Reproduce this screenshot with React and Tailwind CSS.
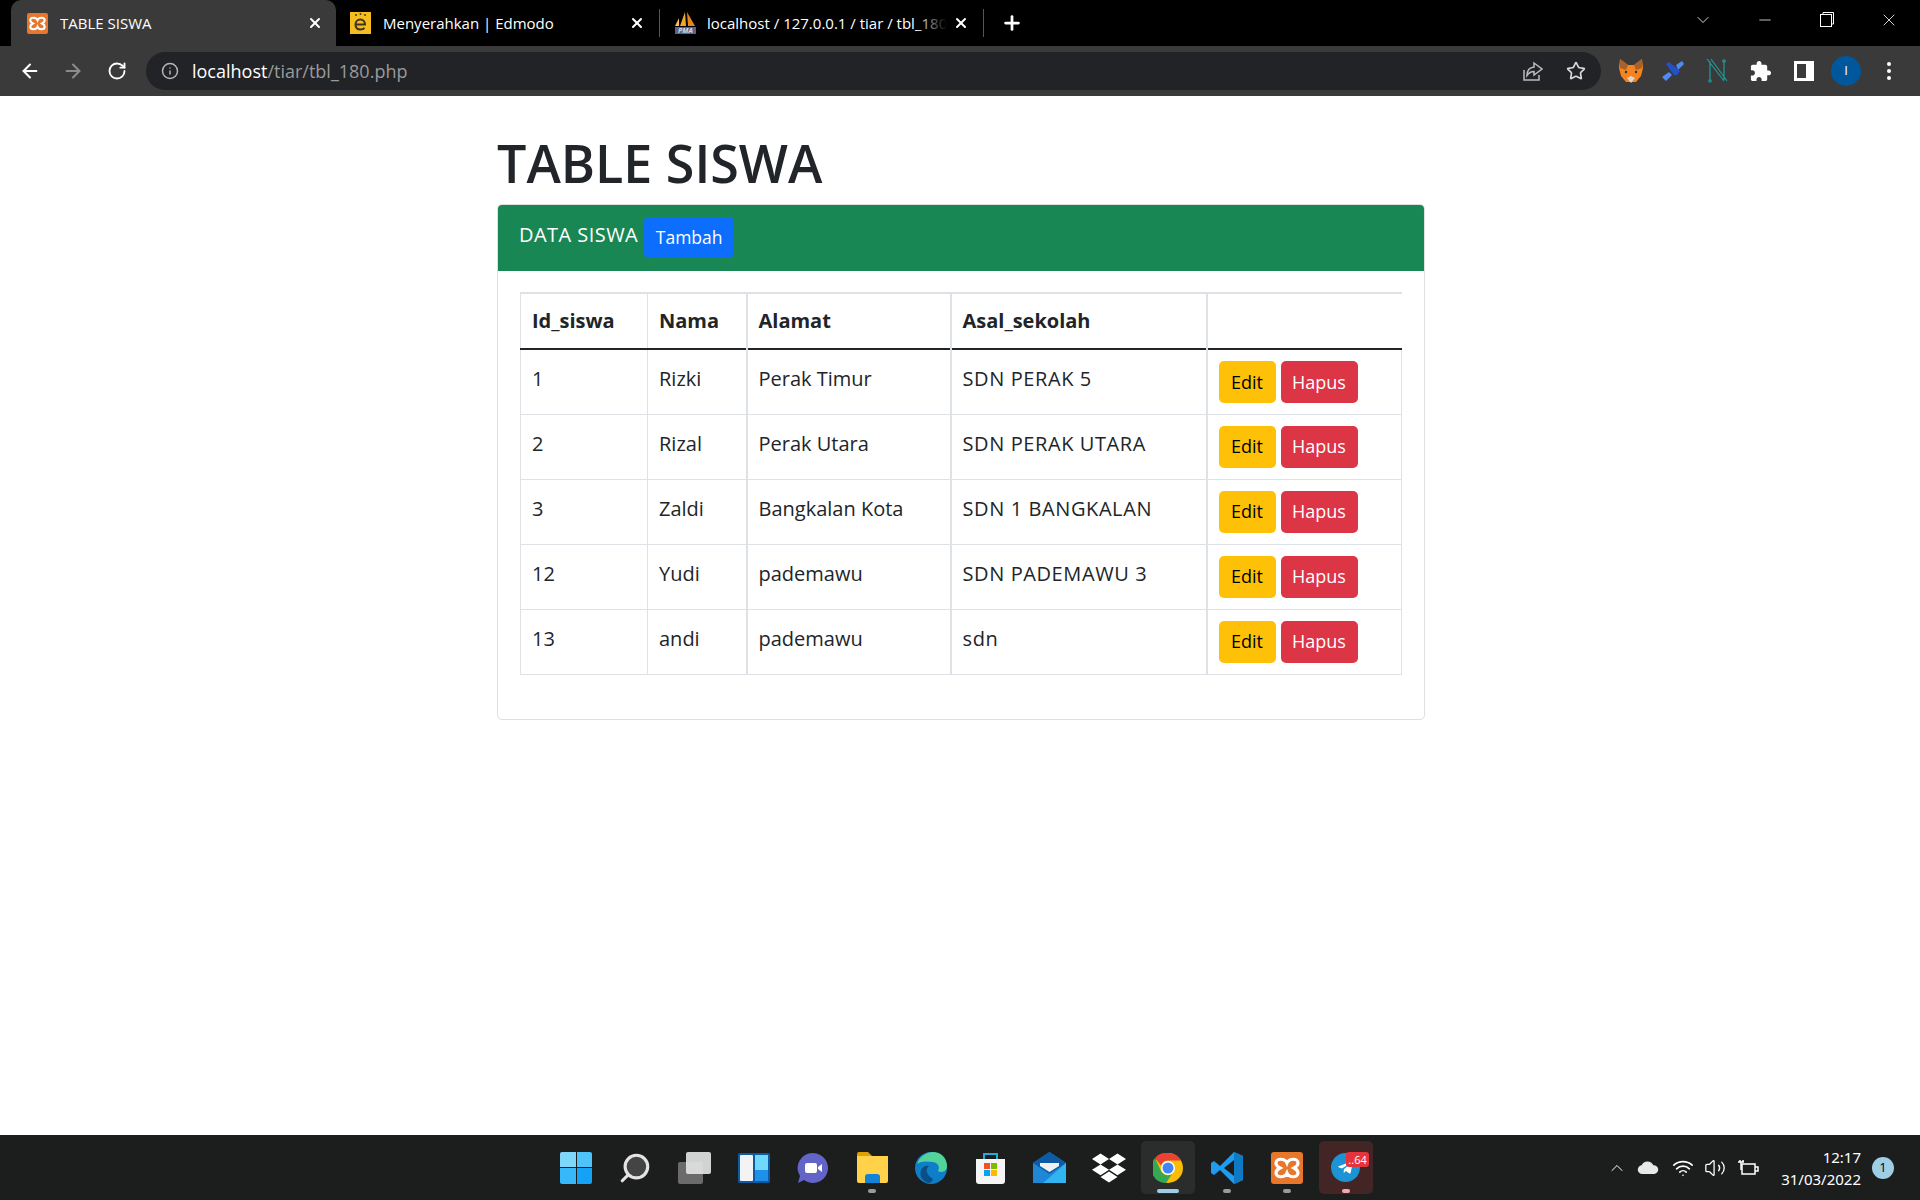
import {
  ArrowLeft,
  ArrowRight,
  RotateCw,
  Info,
  Star,
  X,
  Plus,
  Minus,
  ChevronDown,
  ChevronUp,
  Volume2,
  Wifi,
  Search,
} from "lucide-react";
import { FaDropbox, FaTelegramPlane } from "react-icons/fa";

const siswa = [
  { id: 1, nama: "Rizki", alamat: "Perak Timur", sekolah: "SDN PERAK 5" },
  { id: 2, nama: "Rizal", alamat: "Perak Utara", sekolah: "SDN PERAK UTARA" },
  { id: 3, nama: "Zaldi", alamat: "Bangkalan Kota", sekolah: "SDN 1 BANGKALAN" },
  { id: 12, nama: "Yudi", alamat: "pademawu", sekolah: "SDN PADEMAWU 3" },
  { id: 13, nama: "andi", alamat: "pademawu", sekolah: "sdn" },
];

function Xampp({ size = 20 }) {
  return (
    <svg width={size} height={size} viewBox="0 0 32 32">
      <rect width="32" height="32" rx="3" fill="#e8762b" />
      <path
        d="M16 11C14 6 5 6 5 11c0 2 2 4 4 5-2 1-4 3-4 5 0 5 9 5 11 0 2 5 11 5 11 0 0-2-2-4-4-5 2-1 4-3 4-5 0-5-9-5-11 0z"
        fill="none"
        stroke="#fff"
        strokeWidth="3.2"
      />
    </svg>
  );
}

function Tab({ icon, title, width, active, fade }) {
  return (
    <div
      className={`flex h-[46px] shrink-0 items-center ${width} ${
        active ? "rounded-t-[10px] bg-[#3a3a3a] pl-[16px] pr-[13px]" : "pl-[14px] pr-[14px]"
      }`}
    >
      <div className="flex w-[33px] shrink-0 items-center">{icon}</div>
      <div className="relative min-w-0 flex-1 overflow-hidden whitespace-nowrap text-[15px] text-white">
        {title}
        {fade && (
          <span className="absolute inset-y-0 right-0 w-[32px] bg-gradient-to-r from-transparent to-black" />
        )}
      </div>
      <X size={16} strokeWidth={3} className="ml-[6px] shrink-0 text-white" />
    </div>
  );
}

function TaskIcon({ children, active, dot }) {
  return (
    <div
      className={`relative flex h-[53px] w-[54px] items-center justify-center rounded-[5px] ${
        active === "chrome" ? "bg-[#2b2d2d]" : active === "tg" ? "bg-[#432526]" : ""
      }`}
    >
      {children}
      {dot && <span className={`absolute bottom-[1px] h-[4px] rounded-full ${dot}`} />}
    </div>
  );
}

export default function App() {
  return (
    <div className="flex h-[1200px] flex-col overflow-hidden bg-white font-['Open_Sans','Noto_Sans',sans-serif]">
      {/* Tab strip */}
      <div className="flex h-[46px] shrink-0 items-center bg-black pl-[11px]">
        <Tab active width="w-[325px]" title="TABLE SISWA" icon={<Xampp size={21} />} />
        <Tab
          width="w-[323px]"
          title="Menyerahkan | Edmodo"
          icon={
            <svg width="21" height="22" viewBox="0 0 21 22">
              <rect width="21" height="22" fill="#f6bd1f" />
              <circle cx="6" cy="3" r="1" fill="#4a3b10" />
              <circle cx="10.5" cy="2" r="1" fill="#4a3b10" />
              <circle cx="15" cy="3" r="1" fill="#4a3b10" />
              <path
                d="M5.500 12.500h9.500c0-3-2-5-4.700-5S5.500 9.500 5.500 12.500c0 3 2 5 5 5 1.500 0 3-.5 4-1.500"
                fill="none"
                stroke="#3d3520"
                strokeWidth="2"
              />
            </svg>
          }
        />
        <div className="h-[28px] w-px bg-[#555]" />
        <Tab
          fade
          width="w-[323px]"
          title="localhost / 127.0.0.1 / tiar / tbl_180"
          icon={
            <svg width="23" height="24" viewBox="0 0 23 24">
              <path d="M11 1 6 15h6z" fill="#f5a623" />
              <path d="M13 1l8 14h-7z" fill="#e8871a" />
              <path d="M5 7 1 15h4z" fill="#f8c063" />
              <rect x="1" y="16" width="21" height="7" fill="#5b6483" />
              <text x="11.500" y="22" fontSize="7" fontWeight="700" fontStyle="italic" textAnchor="middle" fill="#d5d8e6">
                PMA
              </text>
            </svg>
          }
        />
        <div className="h-[28px] w-px bg-[#555]" />
        <Plus size={22} strokeWidth={3} className="ml-[17px] text-white" />
        <div className="ml-auto flex items-center pb-[7px] text-white">
          <div className="flex w-[62px] justify-center">
            <ChevronDown size={20} strokeWidth={1} />
          </div>
          <div className="flex w-[62px] justify-center">
            <Minus size={18} strokeWidth={1} />
          </div>
          <div className="flex w-[62px] justify-center">
            <svg width="14" height="15" viewBox="0 0 14 15" fill="none" stroke="#fff">
              <rect x="0.5" y="2.5" width="11" height="12" />
              <path d="M3 2.500V.5h10.500v11.500h-2" />
            </svg>
          </div>
          <div className="flex w-[62px] justify-center">
            <X size={20} strokeWidth={1} />
          </div>
        </div>
      </div>

      {/* Toolbar */}
      <div className="flex h-[50px] shrink-0 items-center bg-[#3a3a3a] pl-[19px]">
        <ArrowLeft size={22} strokeWidth={2.2} className="text-white" />
        <ArrowRight size={22} strokeWidth={2.2} className="ml-[21px] text-[#8c8c8c]" />
        <RotateCw size={20} strokeWidth={2.2} className="ml-[23px] text-white" />
        <div className="ml-[19px] flex h-[38px] w-[1455px] items-center rounded-full bg-[#222327] px-[15px]">
          <Info size={18} className="text-[#b5b5b5]" />
          <span className="ml-[13px] text-[18px] leading-[24px] text-white">localhost</span>
          <span className="text-[18px] leading-[24px] text-[#9a9a9a]">/tiar/tbl_180.php</span>
          <svg className="ml-auto" width="20" height="20" viewBox="0 0 20 20" fill="none" stroke="#bcbcbc" strokeWidth="1.5">
            <path d="M1 9v10h15v-5" />
            <path d="M11 2l8 6-8 6v-3.500c-3 0-5 1-7 4 0-5 3-8 7-8.500z" />
          </svg>
          <Star size={20} strokeWidth={2} className="ml-[23px] text-[#d8d8d8]" />
        </div>
        <div className="ml-[17px] flex items-center">
          <svg width="26" height="26" viewBox="0 0 26 26">
            <path d="M2 1l8 6h6l8-6 1 9-2 8-5 6h-10l-5-6-2-8z" fill="#f5841f" />
            <path d="M2 1l8 6-2 5-6-2zM24 1l-8 6 2 5 6-2z" fill="#a8612a" />
            <path d="M9 20l4 5 4-5-4-2z" fill="#e6d5c6" />
            <circle cx="8" cy="14" r="1.2" fill="#233447" />
            <circle cx="18" cy="14" r="1.2" fill="#233447" />
          </svg>
          <svg className="ml-[17px]" width="24" height="24" viewBox="0 0 24 24">
            <path d="M1 18l7-5 3 3-6 6z" fill="#4e8af0" />
            <path d="M15 6l6-4 2 3-6 6z" fill="#4e8af0" />
            <path d="M5 5l3-2 11 9-3 4-3 0z" fill="#2450c8" />
          </svg>
          <svg className="ml-[20px]" width="24" height="26" viewBox="0 0 24 26" fill="none" stroke="#1e9a9a" strokeWidth="1.2">
            <path d="M5 3v19M19 3v19M2 1l17 22M6 1l16 22" />
            <circle cx="5" cy="23" r="1.200" />
            <circle cx="19" cy="3" r="1.200" />
          </svg>
          <svg className="ml-[20px]" width="23" height="23" viewBox="0 0 24 24" fill="#fff">
            <path d="M20.500 11H19V7c0-1.100-.9-2-2-2h-4V3.500C13 2.120 11.880 1 10.500 1S8 2.120 8 3.500V5H4c-1.100 0-1.990.9-1.990 2v3.800H3.500c1.490 0 2.700 1.210 2.700 2.700s-1.210 2.700-2.700 2.700H2V20c0 1.100.9 2 2 2h3.800v-1.500c0-1.490 1.210-2.700 2.700-2.700 1.490 0 2.700 1.210 2.700 2.700V22H17c1.100 0 2-.9 2-2v-4h1.500c1.380 0 2.500-1.120 2.500-2.500S21.880 11 20.500 11z" />
          </svg>
          <div className="ml-[22px] flex h-[20px] w-[20px] justify-end border-[3px] border-white">
            <div className="w-[5px] bg-white" />
          </div>
          <div className="ml-[17px] flex h-[30px] w-[30px] items-center justify-center rounded-full bg-[#01579b] text-[13px] text-white">
            I
          </div>
          <div className="ml-[26px] flex flex-col gap-[3px]">
            <span className="h-[4px] w-[4px] rounded-full bg-white" />
            <span className="h-[4px] w-[4px] rounded-full bg-white" />
            <span className="h-[4px] w-[4px] rounded-full bg-white" />
          </div>
        </div>
      </div>

      {/* Page */}
      <main className="min-h-0 flex-1 pl-[497px] text-[#212529]">
        <h1 className="mb-[11px] mt-[37px] text-[52px] font-semibold leading-[60px]">TABLE SISWA</h1>
        <div className="w-[928px] rounded-[5px] border border-[#dfdfdf] bg-white">
          <div className="flex h-[66px] items-start rounded-t-[4px] bg-[#198754] pl-[21px] pt-[12px] text-white">
            <span className="mt-[3px] text-[20px] leading-[30px] tracking-[0.45px]">DATA SISWA</span>
            <button className="ml-[6px] h-[41px] w-[90px] rounded-[5px] bg-[#0d6efd] text-[17.5px] text-white">
              Tambah
            </button>
          </div>
          <div className="pb-[44px] pl-[22px] pr-[21px] pt-[21px]">
            <table className="w-[881px] table-fixed border-collapse text-[20px]">
              <colgroup>
                <col className="w-[127px]" />
                <col className="w-[99px]" />
                <col className="w-[204px]" />
                <col className="w-[256px]" />
                <col className="w-[195px]" />
              </colgroup>
              <thead>
                <tr className="h-[56px] border-t-2 border-b-2 border-t-[#dee2e6] border-b-[#212529] font-bold">
                  <th className="border-x border-[#dee2e6] px-[11px] text-left">Id_siswa</th>
                  <th className="border-x border-[#dee2e6] px-[11px] text-left">Nama</th>
                  <th className="border-x-2 border-[#dee2e6] px-[11px] text-left">Alamat</th>
                  <th className="border-x-2 border-[#dee2e6] px-[11px] text-left">Asal_sekolah</th>
                  <th className="border-l border-[#dee2e6]" />
                </tr>
              </thead>
              <tbody>
                {siswa.map((s) => (
                  <tr key={s.id} className="h-[65px] border-b border-[#dee2e6] align-top">
                    <td className="border-x border-[#dee2e6] px-[11px] pt-[14px]">{s.id}</td>
                    <td className="border-x border-[#dee2e6] px-[11px] pt-[14px]">{s.nama}</td>
                    <td className="border-x-2 border-[#dee2e6] px-[11px] pt-[14px]">{s.alamat}</td>
                    <td className="border-x-2 border-[#dee2e6] px-[11px] pt-[14px] tracking-[0.6px]">{s.sekolah}</td>
                    <td className="border-x border-[#dee2e6] pl-[11px] pt-[11px]">
                      <div className="flex gap-[5px]">
                        <button className="h-[42px] w-[57px] rounded-[5px] bg-[#ffc107] text-[18px] text-black">
                          Edit
                        </button>
                        <button className="h-[42px] w-[77px] rounded-[5px] bg-[#dc3545] text-[18px] text-white">
                          Hapus
                        </button>
                      </div>
                    </td>
                  </tr>
                ))}
              </tbody>
            </table>
          </div>
        </div>
      </main>

      {/* Taskbar */}
      <div className="grid h-[65px] shrink-0 grid-cols-[1fr_auto_1fr] items-center bg-[#1c1e1e] text-white">
        <div />
        <div className="ml-[2px] flex gap-[5.2px]">
          <TaskIcon>
            <div className="grid h-[32px] w-[32px] grid-cols-2 gap-[1px]">
              <span className="rounded-tl-[2px] bg-[#7fd6fb]" />
              <span className="rounded-tr-[2px] bg-[#4dc3f9]" />
              <span className="rounded-bl-[2px] bg-[#36b8fa]" />
              <span className="rounded-br-[2px] bg-[#13a2f5]" />
            </div>
          </TaskIcon>
          <TaskIcon>
            <Search size={34} strokeWidth={2.2} className="-scale-x-100 fill-[#444444] text-[#e4e4e4]" />
          </TaskIcon>
          <TaskIcon>
            <div className="relative h-[32px] w-[33px]">
              <div className="absolute bottom-0 left-0 h-[22px] w-[25px] rounded-[2px] bg-[#6b6b6b]" />
              <div className="absolute right-0 top-0 h-[22px] w-[25px] rounded-[2px] bg-[#e6e6e6]/90" />
            </div>
          </TaskIcon>
          <TaskIcon>
            <div className="flex h-[30px] w-[32px] gap-[2px] rounded-[2px] bg-[#0d5aa7] p-[2px]">
              <span className="w-[13px] rounded-[1px] bg-[#f3f3f3]" />
              <div className="flex flex-1 flex-col">
                <span className="flex-1 bg-[#6fd8fb]" />
                <span className="h-[11px] bg-[#1e90e8]" />
              </div>
            </div>
          </TaskIcon>
          <TaskIcon>
            <svg width="32" height="32" viewBox="0 0 32 32">
              <path d="M16 1a15 15 0 1 1-9 27l-6 3 2-7A15 15 0 0 1 16 1z" fill="#6264c8" />
              <rect x="8" y="11" width="12" height="10" rx="2" fill="#fff" />
              <path d="M21 15l4-3v8l-4-3z" fill="#fff" />
            </svg>
          </TaskIcon>
          <TaskIcon dot="w-[8px] bg-[#9a9a9a]">
            <svg width="33" height="31" viewBox="0 0 33 31">
              <path d="M1 2a2 2 0 0 1 2-2h9l4 4H1z" fill="#e0a100" />
              <path d="M1 4h31v25a2 2 0 0 1-2 2H3a2 2 0 0 1-2-2z" fill="#ffd24a" />
              <path d="M9 31v-6a3 3 0 0 1 3-3h9a3 3 0 0 1 3 3v6z" fill="#1383d8" />
            </svg>
          </TaskIcon>
          <TaskIcon>
            <svg width="32" height="32" viewBox="0 0 32 32">
              <circle cx="16" cy="16" r="16" fill="#0f7ec8" />
              <path d="M2 12C5 3 13 0 18 0c8 0 14 6 14 14 0 6-6 7-9 5 2-3 1-8-5-9C12 9 5 9 2 12z" fill="#52d39a" />
              <path d="M13 31c-6-2-9-8-7-13 1-3 5-5 8-4-3 2-4 8 4 13-1 3-3 4-5 4z" fill="#0b4f88" />
            </svg>
          </TaskIcon>
          <TaskIcon>
            <svg width="31" height="32" viewBox="0 0 31 32">
              <path d="M1 7h29v22a3 3 0 0 1-3 3H4a3 3 0 0 1-3-3z" fill="#f5f5f5" />
              <path d="M9 7V2h13v5" fill="none" stroke="#27a9e0" strokeWidth="2" />
              <rect x="9" y="11" width="6" height="6" fill="#f25022" />
              <rect x="16" y="11" width="6" height="6" fill="#7fba00" />
              <rect x="9" y="18" width="6" height="6" fill="#00a4ef" />
              <rect x="16" y="18" width="6" height="6" fill="#ffb900" />
            </svg>
          </TaskIcon>
          <TaskIcon>
            <svg width="33" height="31" viewBox="0 0 33 31">
              <path d="M0 11 16.500 0 33 11v20H0z" fill="#1e87d6" />
              <path d="M0 11 16.500 0 33 11l-16.500 11z" fill="#0d5aa7" />
              <path d="M7 11h19v3l-9.500 6L7 14z" fill="#f1f1f1" />
              <path d="M33 11v20H10z" fill="#31b4f0" />
            </svg>
          </TaskIcon>
          <TaskIcon>
            <FaDropbox size={34} className="text-white" />
          </TaskIcon>
          <TaskIcon active="chrome" dot="w-[22px] bg-[#9fcde6]">
            <svg width="30" height="30" viewBox="0 0 30 30">
              <circle cx="15" cy="15" r="15" fill="#fbbc04" />
              <path d="M15 0a15 15 0 0 1 13 7.500H15a7.500 7.500 0 0 0-7 5L2 5A15 15 0 0 1 15 0z" fill="#ea4335" />
              <path d="M2 5l6.500 14A7.500 7.500 0 0 0 19 21l-6 9A15 15 0 0 1 2 5z" fill="#34a853" />
              <circle cx="15" cy="15" r="7" fill="#fff" />
              <circle cx="15" cy="15" r="5.500" fill="#4285f4" />
            </svg>
          </TaskIcon>
          <TaskIcon dot="w-[8px] bg-[#9a9a9a]">
            <svg width="32" height="32" viewBox="0 0 32 32">
              <path d="M23 0l9 4v24l-9 4L9 18l-6 5-3-2v-10l3-2 6 5z" fill="#1f9cf0" />
              <path d="M23 8 13 16l10 8z" fill="#1c1e1e" />
              <path d="M23 0l9 4v24l-9 4z" fill="#0e7ac4" />
            </svg>
          </TaskIcon>
          <TaskIcon dot="w-[8px] bg-[#9a9a9a]">
            <Xampp size={32} />
          </TaskIcon>
          <TaskIcon active="tg" dot="w-[8px] bg-[#f4a5b5]">
            <div className="flex h-[29px] w-[29px] items-center justify-center rounded-full bg-[#1c93d5]">
              <FaTelegramPlane size={17} className="text-white" />
            </div>
            <span className="absolute right-[4px] top-[11px] rounded-[3px] bg-[#e5343c] px-[2px] text-[11px] leading-[15px] text-white">
              ..64
            </span>
          </TaskIcon>
        </div>
        <div className="flex items-center justify-self-end pr-[26px]">
          <ChevronUp size={20} strokeWidth={1.2} />
          <svg className="ml-[10px]" width="22" height="15" viewBox="0 0 20 14">
            <path d="M5 13a4 4 0 0 1-1-8 6 6 0 0 1 11 0 4 4 0 0 1 1 8z" fill="#e8e8e8" />
          </svg>
          <Wifi size={22} strokeWidth={1.8} className="ml-[13px]" />
          <Volume2 size={22} strokeWidth={1.4} className="ml-[10px]" />
          <svg className="ml-[11px]" width="22" height="18" viewBox="0 0 22 18" fill="none" stroke="#fff" strokeWidth="1.5">
            <rect x="5" y="5" width="13" height="10" />
            <path d="M18 8h3v4h-3M1 3h6M3 1v2M6 1v2M4 3v8" />
          </svg>
          <div className="ml-[22px] text-right font-['Noto_Sans',sans-serif] text-[15px] leading-[22px]">
            <div>12:17</div>
            <div>31/03/2022</div>
          </div>
          <div className="ml-[11px] flex h-[22px] w-[22px] items-center justify-center rounded-full bg-[#9fcde6] text-[13px] text-black">
            1
          </div>
        </div>
      </div>
    </div>
  );
}
